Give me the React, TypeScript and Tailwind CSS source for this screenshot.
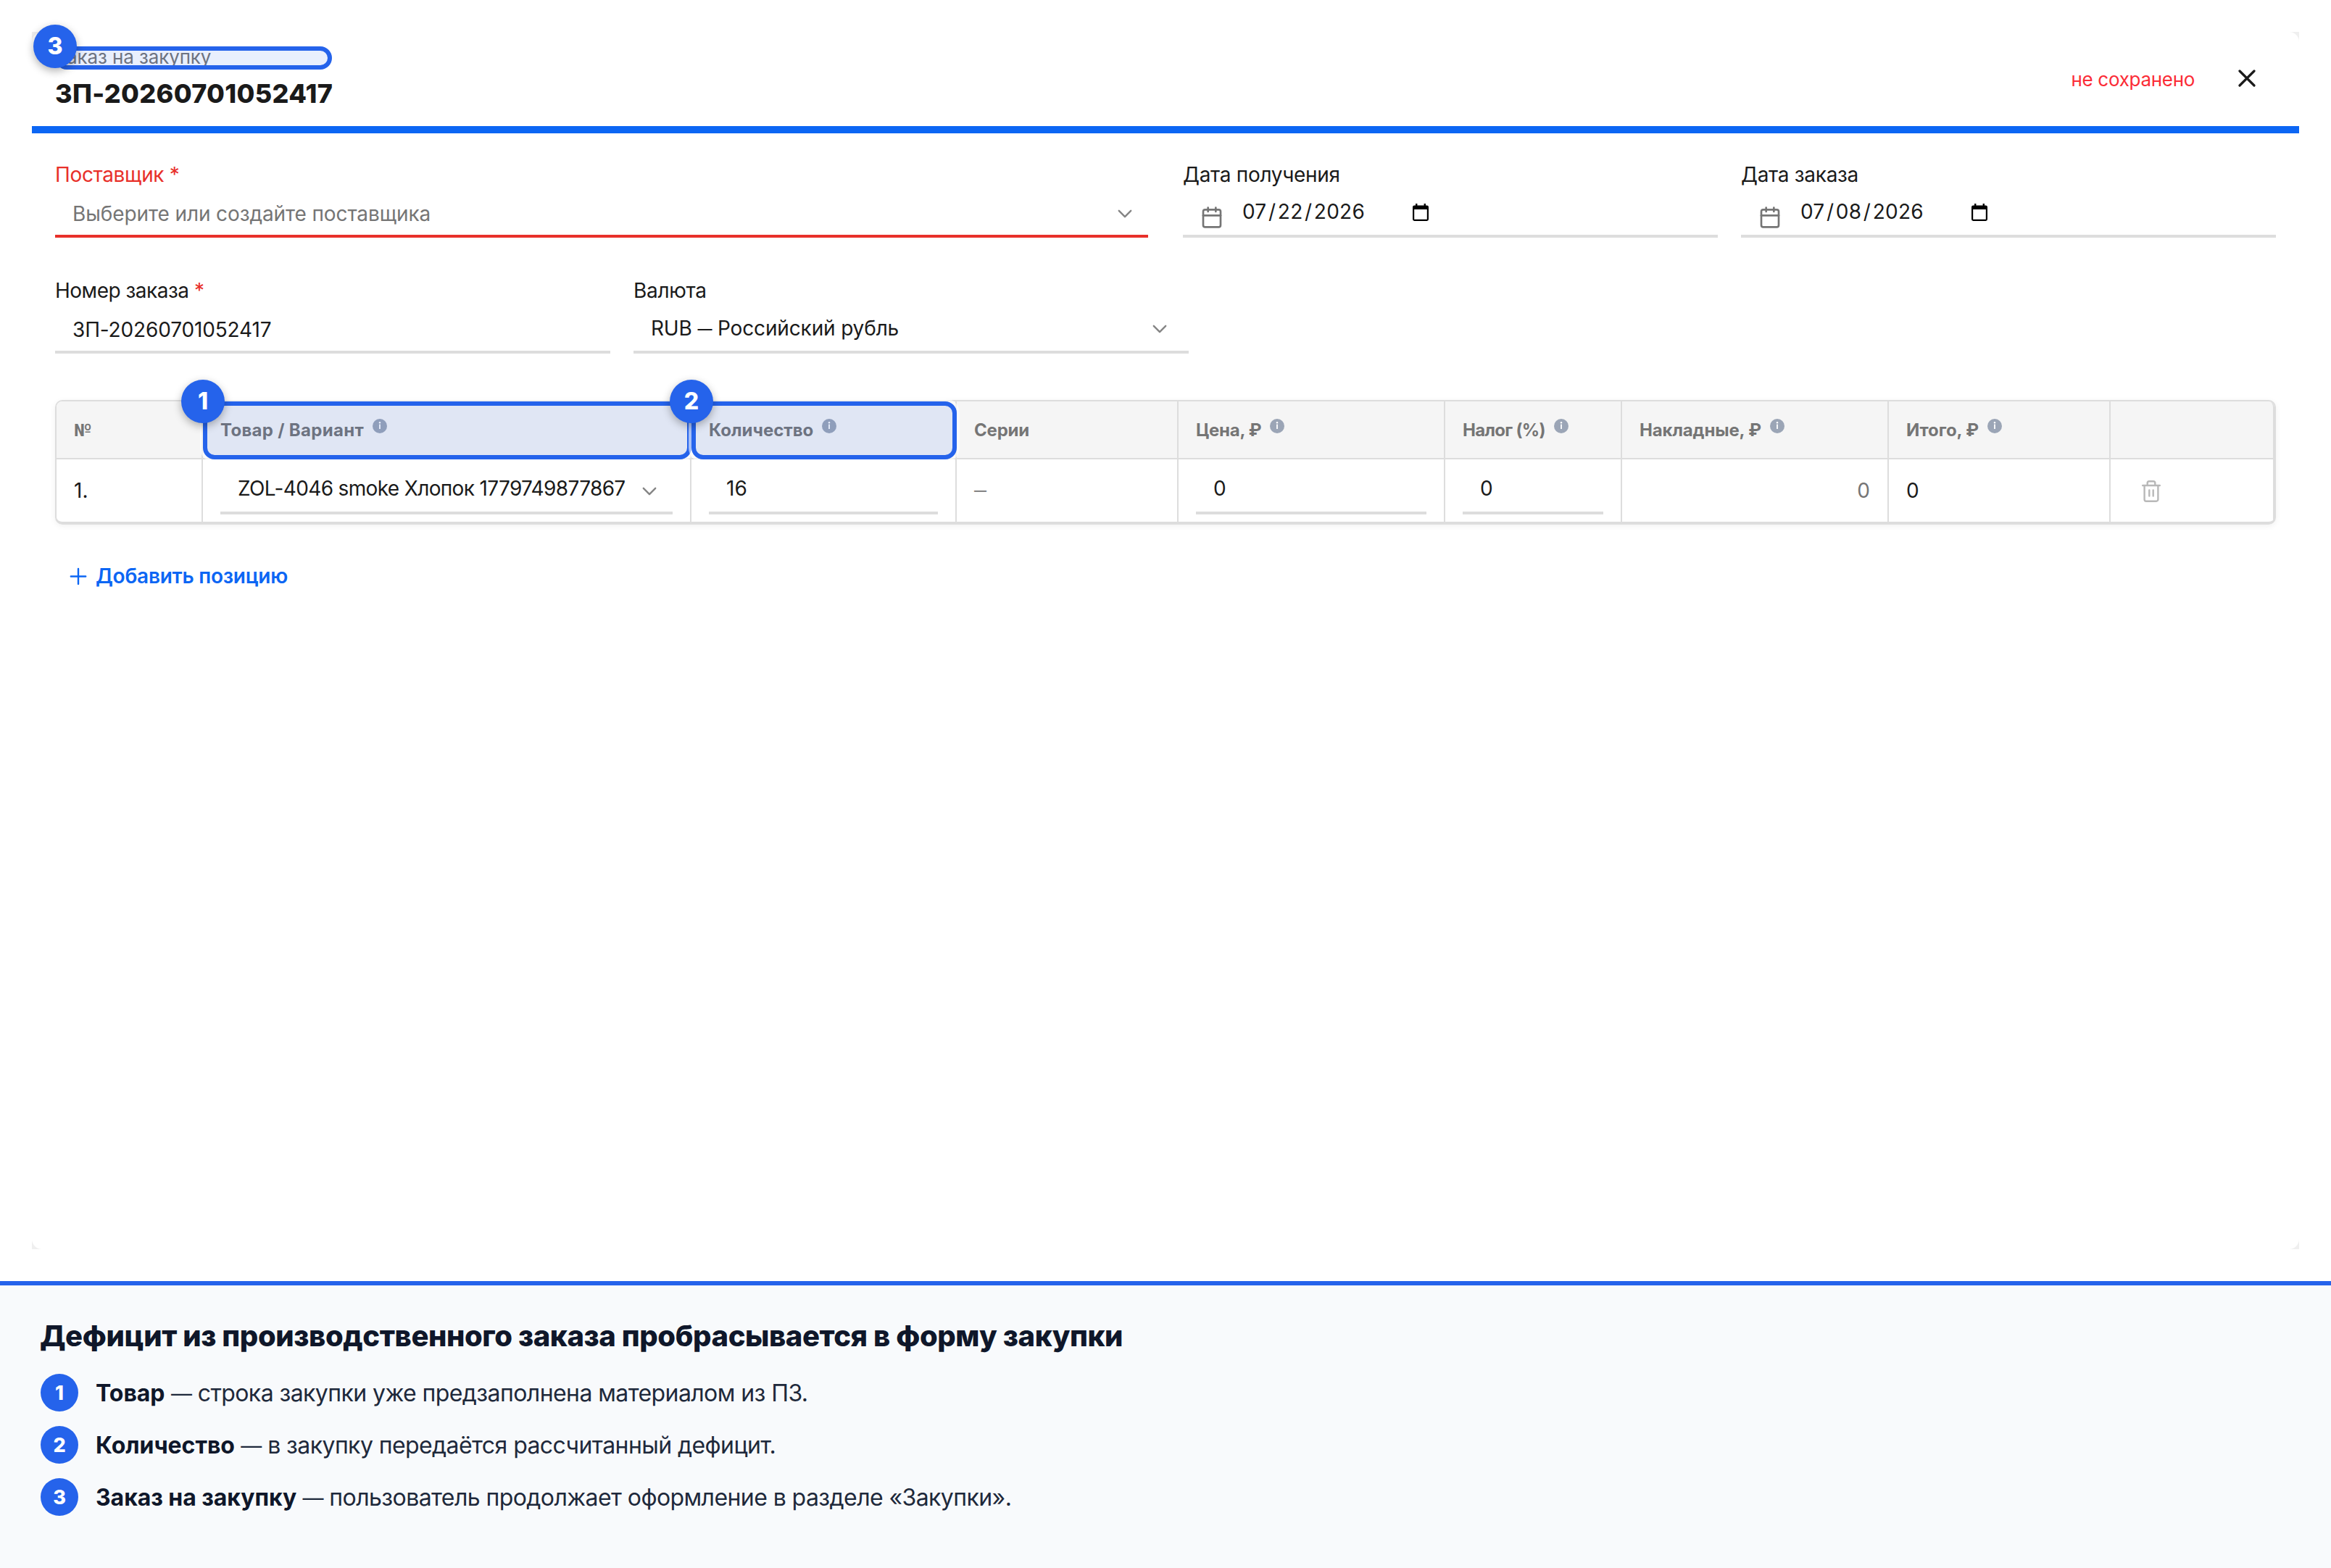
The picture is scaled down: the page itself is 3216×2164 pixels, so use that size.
import { Calendar } from "lucide-react";
import type { ReactNode } from "react";

function Chevron() {
  return (
    <svg width="20" height="12" viewBox="0 0 20 12" fill="none" stroke="#858585" strokeWidth="2.4" strokeLinecap="round" strokeLinejoin="round">
      <path d="M1.8 1.8 10 10.2 18.2 1.8" />
    </svg>
  );
}

function CloseIcon() {
  return (
    <svg className="relative -top-px" width="24" height="24" viewBox="0 0 24 24" fill="none" stroke="#1a1a1a" strokeWidth="3.2" strokeLinecap="round">
      <path d="M2 2 22 22M22 2 2 22" />
    </svg>
  );
}

function InfoIcon() {
  return (
    <svg className="relative -top-1.5 shrink-0" width="20" height="20" viewBox="0 0 20 20">
      <circle cx="10" cy="10" r="10" fill="#9ba5b6" />
      <circle cx="10" cy="5.3" r="1.2" fill="#fff" />
      <path d="M10 7.6V14" stroke="#fff" strokeWidth="1.8" />
    </svg>
  );
}

function PickerIcon() {
  return (
    <svg className="relative top-px" width="22" height="24" viewBox="0 0 22 24">
      <path
        fillRule="evenodd"
        d="M4 0h2.4v2.4h9.2V0H18v2.4h1.6A2.4 2.4 0 0 1 22 4.8v16.8a2.4 2.4 0 0 1-2.4 2.4H2.4A2.4 2.4 0 0 1 0 21.6V4.8a2.4 2.4 0 0 1 2.4-2.4H4zM2.2 8v13.8h17.6V8z"
      />
    </svg>
  );
}

function TrashIcon() {
  return (
    <svg className="relative top-px" width="26" height="30" viewBox="0 0 26 30" fill="none" stroke="#b8b8b8" strokeWidth="2.4" strokeLinecap="round" strokeLinejoin="round">
      <path d="M1.2 7h23.6M3.6 7v19.3A2.4 2.4 0 0 0 6 28.7h14a2.4 2.4 0 0 0 2.4-2.4V7M7.7 7V3.6a2.4 2.4 0 0 1 2.4-2.4h5.8a2.4 2.4 0 0 1 2.4 2.4V7M10.3 13.4v8.2M15.7 13.4v8.2" />
    </svg>
  );
}

function Highlight({ n, className }: { n: number; className: string }) {
  return (
    <div className={`absolute z-10 rounded-[16px] border-6 border-[#2563eb] bg-[#2563eb]/10 shadow-[0_0_0_4px_rgba(255,255,255,0.6)] ${className}`}>
      <span className="absolute -top-9 -left-9 z-20 flex size-[60px] items-center justify-center rounded-full bg-[#2563eb] text-[32px] font-extrabold tracking-normal text-white shadow-[0_4px_12px_rgba(0,0,0,0.3)]">
        {n}
      </span>
    </div>
  );
}

function DateField({ label, value }: { label: string; value: string }) {
  const [m, d, y] = value.split("/");
  return (
    <div className="w-[738px]">
      <p className="relative top-px leading-10 tracking-[-0.3px]">{label}</p>
      <div className="flex h-[68px] items-center border-b-4 border-[#dddddd] pl-6">
        <Calendar className="relative top-2 mr-[26px] size-8 text-[#757575]" />
        <span className="mr-[66px] tracking-[0.25px]">
          {m}
          <span className="mx-[2.5px]">/</span>
          {d}
          <span className="mx-[2.5px]">/</span>
          {y}
        </span>
        <PickerIcon />
      </div>
    </div>
  );
}

function Cell({ children, className = "" }: { children?: ReactNode; className?: string }) {
  return <div className={`flex h-[86px] items-center border-r-2 border-[#dddddd] px-6 ${className}`}>{children}</div>;
}

function Input({ children, className = "" }: { children?: ReactNode; className?: string }) {
  return (
    <div className={`relative -top-0.5 flex h-[70px] w-full items-center justify-between border-b-4 border-[#dddddd] pt-0.5 pl-6 ${className}`}>
      {children}
    </div>
  );
}

const columns = [
  { title: "№", className: "rounded-tl-[8px] font-['Roboto',sans-serif]" },
  { title: "Товар / Вариант", info: true, mark: 1, className: "tracking-[0.3px]" },
  { title: "Количество", info: true, mark: 2 },
  { title: "Серии", className: "tracking-[-0.2px]" },
  { title: "Цена, ₽", info: true, className: "tracking-[-0.3px]" },
  { title: "Налог (%)", info: true, className: "tracking-[-0.7px]" },
  { title: "Накладные, ₽", info: true, className: "tracking-[-0.15px]" },
  { title: "Итого, ₽", info: true, className: "tracking-[-0.1px]" },
  { title: "", className: "rounded-tr-[8px] border-r-0" },
];

const legend = [
  ["Товар", "строка закупки уже предзаполнена материалом из ПЗ."],
  ["Количество", "в закупку передаётся рассчитанный дефицит."],
  ["Заказ на закупку", "пользователь продолжает оформление в разделе «Закупки»."],
];

export default function App() {
  return (
    <main className="flex h-[2164px] w-[3216px] flex-col bg-white font-[Inter,sans-serif] text-[28px] text-[#1a1a1a]">
      <div className="h-[1768px] px-11 pt-11">
        <div className="h-[1680px] bg-[#efefef]">
          <section className="h-full rounded-[14px] bg-white">
            <header className="flex h-[140px] items-center justify-between border-b-10 border-[#0c66f4] pr-[60px] pl-8">
              <div className="w-[382px] self-start pt-[15px]">
                <div className="relative text-[26px] leading-10 tracking-[-0.1px] text-[#757575]">
                  Заказ на закупку
                  <Highlight n={3} className="inset-x-0 top-[5px] bottom-[3px]" />
                </div>
                <h1 className="text-[36px] leading-[60px] font-extrabold tracking-[0.3px] whitespace-nowrap">ЗП-20260701052417</h1>
              </div>
              <div className="flex items-center gap-[60px]">
                <span className="text-[26px] tracking-[-0.3px] text-[#fb2c36]">не сохранено</span>
                <CloseIcon />
              </div>
            </header>

            <div className="px-8 pt-9">
              <div className="flex justify-between">
                <div className="w-[1508px]">
                  <p className="relative top-px leading-10 tracking-[-0.35px] text-[#e8302a]">Поставщик *</p>
                  <div className="flex h-[68px] items-center justify-between border-b-4 border-[#e8302a] pt-[5px] pr-[22px] pl-6 tracking-[-0.1px] text-[#757575]">
                    Выберите или создайте поставщика
                    <Chevron />
                  </div>
                </div>
                <div className="flex gap-8">
                  <DateField label="Дата получения" value="07/22/2026" />
                  <DateField label="Дата заказа" value="07/08/2026" />
                </div>
              </div>

              <div className="mt-[52px] flex gap-8">
                <div className="w-[766px]">
                  <p className="relative top-px leading-10 tracking-[-0.5px]">
                    Номер заказа <span className="text-[#e8302a]">*</span>
                  </p>
                  <div className="flex h-[68px] items-center border-b-4 border-[#dddddd] pt-[5px] pl-6 tracking-[-0.15px]">ЗП-20260701052417</div>
                </div>
                <div className="w-[766px]">
                  <p className="relative top-px leading-10 tracking-[-0.3px]">Валюта</p>
                  <div className="flex h-[68px] items-center justify-between border-b-4 border-[#dddddd] pt-px pr-[30px] pl-6">
                    <span className="tracking-[-0.15px]">
                      RUB <span className="relative -top-0.5 text-[20px] font-semibold">—</span> Российский рубль
                    </span>
                    <span className="relative top-px">
                      <Chevron />
                    </span>
                  </div>
                </div>
              </div>

              <div className="mt-16 grid grid-cols-[202px_674px_366px_306px_368px_244px_368px_306px_226px] rounded-[10px] border-2 border-b-4 border-[#dddddd] shadow-[0_2px_8px_rgba(0,0,0,0.06)]">
                {columns.map((c) => (
                  <div
                    key={c.title}
                    className={`relative flex h-20 items-center gap-3 border-r-2 border-b-2 border-[#dddddd] bg-[#f5f5f5] pt-0.5 pl-6 text-[24px] font-bold text-[#757575] ${c.className ?? ""}`}
                  >
                    {c.title}
                    {c.info && <InfoIcon />}
                    {c.mark && <Highlight n={c.mark} className="top-0 -right-0.5 -bottom-0.5 left-0" />}
                  </div>
                ))}

                <Cell>1.</Cell>
                <Cell>
                  <Input className="pr-[22px] tracking-[-0.65px]">
                    ZOL-4046 smoke Хлопок 1779749877867
                    <span className="relative top-1">
                      <Chevron />
                    </span>
                  </Input>
                </Cell>
                <Cell>
                  <Input>16</Input>
                </Cell>
                <Cell className="pt-0.5 text-[17px] font-semibold text-[#757575]">—</Cell>
                <Cell>
                  <Input>0</Input>
                </Cell>
                <Cell>
                  <Input>0</Input>
                </Cell>
                <Cell className="justify-end text-[#757575]">0</Cell>
                <Cell>0</Cell>
                <Cell className="border-r-0 pl-[43px]">
                  <TrashIcon />
                </Cell>
              </div>

              <button className="mt-[51px] ml-5 flex h-10 items-center gap-3 font-semibold tracking-[-0.25px] text-[#0c66f4]">
                <svg width="24" height="24" viewBox="0 0 24 24" stroke="currentColor" strokeWidth="2.4" strokeLinecap="round">
                  <path d="M12 2v21M1.8 12.5h20.4" />
                </svg>
                Добавить позицию
              </button>
            </div>
          </section>
        </div>
      </div>

      <footer className="flex-1 border-t-6 border-[#2563eb] bg-[#f8fafc] px-14 pt-11 text-[32px] text-[#1e293b]">
        <h2 className="-ml-px text-[40px] leading-[52px] font-extrabold tracking-[-0.41px] text-[#0f172a]">
          Дефицит из производственного заказа пробрасывается в форму закупки
        </h2>
        <ol className="mt-[26px] flex flex-col gap-5">
          {legend.map(([name, text], i) => (
            <li key={name} className="flex h-[52px] items-center">
              <span className="mr-6 flex size-[52px] items-center justify-center rounded-full bg-[#2563eb] pt-[3px] text-[27px] font-extrabold text-white">
                {i + 1}
              </span>
              <p className="relative top-px tracking-[-0.58px]">
                <b className="font-bold tracking-[-0.05px] text-[#0f172a]">{name}</b> <span className="text-[29px]">—</span> {text}
              </p>
            </li>
          ))}
        </ol>
      </footer>
    </main>
  );
}
